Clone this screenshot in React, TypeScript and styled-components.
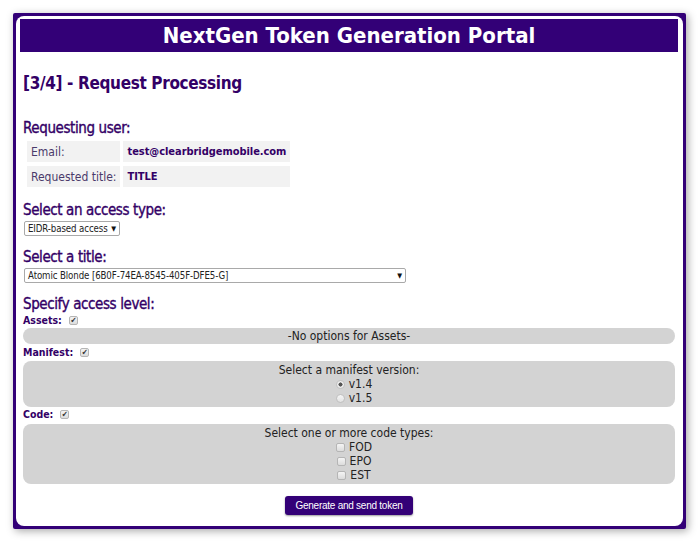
import React from "react";
import styled, { createGlobalStyle } from "styled-components";

const Global = createGlobalStyle`
  html, body { margin: 0; padding: 0; background: #ffffff; }
  body { font-family: "DejaVu Sans Condensed", Tahoma, "DejaVu Sans", sans-serif; }
  #root { padding: 13px 13px 14px 13px; }
`;

const purple = "#330077";
const ink = "#330066";

const Frame = styled.div`
  background: ${purple};
  padding: 3px;
  border-radius: 2px;
  box-shadow: 2px 2px 8px rgba(0, 0, 0, 0.35);
`;

const Sheet = styled.div`
  background: #ffffff;
  border-radius: 8px;
  padding: 3px 5px 11px 4px;
`;

const Header = styled.h1`
  margin: 0;
  height: 33px;
  background: ${purple};
  color: #ffffff;
  font-size: 22px;
  font-weight: bold;
  line-height: 33px;
  text-align: center;
`;

const Body = styled.div`
  padding: 0 3px;
  display: flex;
  flex-direction: column;
  align-items: stretch;
`;

const StepTitle = styled.h2`
  margin: 20px 0 0 0;
  font-size: 17px;
  letter-spacing: -0.35px;
  line-height: 22px;
  font-weight: bold;
  color: ${ink};
`;

const SectionTitle = styled.h3<{ $top: number }>`
  margin: ${(p) => p.$top}px 0 0 0;
  font-size: 15px;
  letter-spacing: -0.4px;
  line-height: 19px;
  font-weight: normal;
  -webkit-text-stroke: 0.35px ${ink};
  color: ${ink};
`;

const InfoTable = styled.table`
  align-self: flex-start;
  border-spacing: 3px 4px;
  margin: -1px 0 0 1px;
  font-size: 12px;
`;

const LabelCell = styled.td`
  background: #f2f2f2;
  color: #4a3a6a;
  height: 21px;
  padding: 0 4px;
  width: 84px;
  white-space: nowrap;
`;

const ValueCell = styled.td`
  background: #f2f2f2;
  color: ${ink};
  font-size: 11px;
  letter-spacing: -0.05px;
  font-weight: bold;
  padding: 0 4px;
  width: 153px;
  white-space: nowrap;
`;

const SelectBox = styled.div<{ $width: number }>`
  align-self: flex-start;
  margin: 1px 0 0 1px;
  width: ${(p) => p.$width}px;
  height: 15px;
  box-sizing: border-box;
  border: 1px solid #a9a9a9;
  border-radius: 2px;
  background: #ffffff;
  display: flex;
  align-items: center;
  justify-content: space-between;
  padding: 0 3px 0 3px;
  font-size: 9.6px;
  letter-spacing: -0.1px;
  white-space: nowrap;
  color: #222222;
`;

const Arrow = styled.span`
  font-size: 7px;
  color: #111;
`;

const OptionRow = styled.div<{ $top: number }>`
  margin: ${(p) => p.$top}px 0 0 0;
  display: flex;
  align-items: center;
  gap: 7px;
  font-size: 10.5px;
  line-height: 13px;
  font-weight: bold;
  color: ${ink};
`;

const Check = styled.span`
  width: 9px;
  height: 9px;
  box-sizing: border-box;
  border: 1px solid #b5b5b5;
  border-radius: 2px;
  background: linear-gradient(#f4f4f4, #dcdcdc);
  display: inline-flex;
  align-items: center;
  justify-content: center;
  font-size: 8px;
  line-height: 1;
  color: #333;
  font-weight: bold;
`;

const Radio = styled.span<{ $checked?: boolean }>`
  width: 9px;
  height: 9px;
  box-sizing: border-box;
  border: 1px solid #c0c0c0;
  border-radius: 50%;
  background: ${(p) =>
    p.$checked
      ? "radial-gradient(circle, #555 0 1.8px, #eee 2.3px)"
      : "linear-gradient(#f6f6f6, #e2e2e2)"};
  display: inline-block;
`;

const Panel = styled.div<{ $top: number; $pad: number }>`
  margin: ${(p) => p.$top}px 0 0 0;
  background: #d3d3d3;
  border-radius: 8px;
  padding: ${(p) => p.$pad}px 0;
  display: flex;
  flex-direction: column;
  align-items: center;
  font-size: 12px;
  line-height: 14px;
  color: #222222;
`;

const Choice = styled.label`
  display: flex;
  align-items: center;
  gap: 4px;
  margin-left: 10px;
`;

const Footer = styled.div`
  display: flex;
  justify-content: center;
  margin-top: 12px;
`;

const Button = styled.button`
  background: ${purple};
  color: #ffffff;
  border: none;
  border-radius: 3px;
  width: 128px;
  height: 19px;
  font-family: "Liberation Sans", Arial, sans-serif;
  font-size: 10px;
  letter-spacing: -0.25px;
  white-space: nowrap;
  padding: 0;
  box-shadow: 0 1px 2px rgba(0, 0, 0, 0.4);
`;

export default function App() {
  return (
    <>
      <Global />
      <Frame>
        <Sheet>
          <Header>NextGen Token Generation Portal</Header>
          <Body>
            <StepTitle>[3/4] - Request Processing</StepTitle>
            <SectionTitle $top={25}>Requesting user:</SectionTitle>
            <InfoTable>
              <tbody>
                <tr>
                  <LabelCell>Email:</LabelCell>
                  <ValueCell>test@clearbridgemobile.com</ValueCell>
                </tr>
                <tr>
                  <LabelCell>Requested title:</LabelCell>
                  <ValueCell>TITLE</ValueCell>
                </tr>
              </tbody>
            </InfoTable>
            <SectionTitle $top={10}>Select an access type:</SectionTitle>
            <SelectBox $width={96}>
              <span>EIDR-based access</span>
              <Arrow>▼</Arrow>
            </SelectBox>
            <SectionTitle $top={12}>Select a title:</SectionTitle>
            <SelectBox $width={382}>
              <span>Atomic Blonde [6B0F-74EA-8545-405F-DFE5-G]</span>
              <Arrow>▼</Arrow>
            </SelectBox>
            <SectionTitle $top={12}>Specify access level:</SectionTitle>
            <OptionRow $top={0}>
              <span>Assets:</span>
              <Check>✔</Check>
            </OptionRow>
            <Panel $top={1} $pad={1}>
              -No options for Assets-
            </Panel>
            <OptionRow $top={2}>
              <span>Manifest:</span>
              <Check>✔</Check>
            </OptionRow>
            <Panel $top={2} $pad={2}>
              <div>Select a manifest version:</div>
              <Choice>
                <Radio $checked /> v1.4
              </Choice>
              <Choice>
                <Radio /> v1.5
              </Choice>
            </Panel>
            <OptionRow $top={1}>
              <span>Code:</span>
              <Check>✔</Check>
            </OptionRow>
            <Panel $top={3} $pad={2}>
              <div>Select one or more code types:</div>
              <Choice>
                <Check /> FOD
              </Choice>
              <Choice>
                <Check /> EPO
              </Choice>
              <Choice>
                <Check /> EST
              </Choice>
            </Panel>
            <Footer>
              <Button>Generate and send token</Button>
            </Footer>
          </Body>
        </Sheet>
      </Frame>
    </>
  );
}
